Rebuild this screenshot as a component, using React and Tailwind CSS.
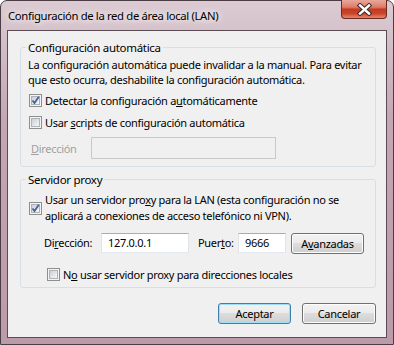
import React from "react";

const font = { fontFamily: '"Noto Sans", "Open Sans", sans-serif' };

// Windows 7 style checkbox
function CheckBox({ checked }) {
  return (
    <span className="inline-flex h-[13px] w-[13px] shrink-0 items-center justify-center border border-[#8e8f8f] bg-[#f4f4f4]">
      <span className="relative flex h-[9px] w-[9px] items-center justify-center border border-[#aeb3b9] bg-[linear-gradient(135deg,#cbcfd5,#f7f7f7)]">
        {checked && (
          <svg width="11" height="11" viewBox="0 0 11 11" className="absolute left-[-2px] top-[-2px]">
            <path d="M2.5 5.5 L4.5 8 L8.8 1.8" fill="none" stroke="#4a5f97" strokeWidth="1.8" />
          </svg>
        )}
      </span>
    </span>
  );
}

function TextBox({ value, className, disabled }) {
  return (
    <div
      className={`flex h-[20px] items-center border px-[6px] ${
        disabled
          ? "border-[#c9c9c9] bg-[#f0f0f0]"
          : "border-[#e2e3ea] border-t-[#abadb3] border-b-[#e3e9ef] bg-white"
      } ${className}`}
    >
      {value}
    </div>
  );
}

function Button({ children, isDefault, className }) {
  return (
    <div
      className={`flex h-[21px] items-center justify-center rounded-[3px] border ${
        isDefault ? "border-[#3c7fb1] shadow-[inset_0_0_0_1px_#9fdcf6]" : "border-[#707070] shadow-[inset_0_0_0_1px_#fcfcfc]"
      } bg-[linear-gradient(to_bottom,#f2f2f2_0%,#ebebeb_50%,#dddddd_50%,#cfcfcf_100%)] ${className}`}
    >
      {children}
    </div>
  );
}

export default function App() {
  return (
    <div
      style={font}
      className="flex h-[345px] w-[394px] flex-col rounded-t-[7px] border border-[#4b3d44] bg-[linear-gradient(to_bottom,#dccbd3_0px,#d3bfc8_40px,#c4a6b4_120px,#bb9aa9_100%)] px-[6px] pb-[6px] text-[11px] leading-[15px] tracking-[-0.3px] text-black"
    >
      {/* Title bar */}
      <div className="flex h-[29px] shrink-0 items-start justify-between">
        <div className="pl-[1px] pt-[7px] text-[11.3px] tracking-[-0.35px] [text-shadow:0_0_6px_#ffffff,0_0_10px_#ffffff]">
          Configuración de la red de área local (LAN)
        </div>
        <div className="-mt-px flex h-[19px] w-[46px] items-center justify-center rounded-b-[4px] border border-t-0 border-[#6b2a20] bg-[linear-gradient(to_bottom,#e9a89a_0%,#dc7c66_40%,#c7391e_52%,#c9452a_75%,#e4886f_100%)]">
          <svg width="15" height="13" viewBox="0 0 15 13">
            <path d="M3 2.5 L12 10.5 M12 2.5 L3 10.5" stroke="#3d2a2a" strokeWidth="4.4" strokeLinecap="square" />
            <path d="M3 2.5 L12 10.5 M12 2.5 L3 10.5" stroke="#ffffff" strokeWidth="2.4" strokeLinecap="square" />
          </svg>
        </div>
      </div>

      {/* Client area */}
      <div className="flex flex-1 flex-col border border-[#5a4c53] bg-[#f0f0f0] pl-[12px] pr-[10px] pt-[9px]">
        <fieldset className="h-[127px] rounded-[3px] border border-[#d5dfe5] px-[7px]">
          <legend className="ml-[-2px] px-[2px] text-[11.5px]">Configuración automática</legend>
          <div className="pt-[2px]">
            La configuración automática puede invalidar a la manual. Para evitar que esto ocurra, deshabilite la configuración automática.
          </div>
          <div className="mt-[5px] flex h-[17px] items-center gap-[3px] pl-[1px]">
            <CheckBox checked />
            <span>
              Detectar la configuración a<u>u</u>tomáticamente
            </span>
          </div>
          <div className="mt-[5px] flex h-[17px] items-center gap-[3px] pl-[1px]">
            <CheckBox />
            <span>
              Usar <u>s</u>cripts de configuración automática
            </span>
          </div>
          <div className="mt-[6px] flex items-center">
            <span className="w-[63px] pl-[3px] text-[#a0a0a0]">
              <u>D</u>irección
            </span>
            <TextBox disabled className="h-[22px] w-[185px]" />
          </div>
        </fieldset>

        <fieldset className="mt-[5px] h-[116px] rounded-[3px] border border-[#d5dfe5] px-[7px]">
          <legend className="ml-[-2px] px-[2px] text-[11.5px]">Servidor proxy</legend>
          <div className="mt-[5px] flex items-center gap-[3px] pl-[1px] leading-[16px]">
            <CheckBox checked />
            <span>
              Usar un servidor pro<u>x</u>y para la LAN (esta configuración no se aplicará a conexiones de acceso telefónico ni VPN).
            </span>
          </div>
          <div className="mt-[7px] flex items-center pl-[16px]">
            <span className="w-[57px]">
              Di<u>r</u>ección:
            </span>
            <TextBox value="127.0.0.1" className="w-[88px]" />
            <span className="ml-[9px] w-[40px]">
              Puer<u>t</u>o:
            </span>
            <TextBox value="9666" className="w-[48px] px-[4px]" />
            <Button className="ml-[5px] mt-[2px] w-[73px]">
              A<u>v</u>anzadas
            </Button>
          </div>
          <div className="mt-[12px] flex h-[17px] items-center gap-[3px] pl-[19px]">
            <CheckBox />
            <span>
              N<u>o</u> usar servidor proxy para direcciones locales
            </span>
          </div>
        </fieldset>

        <div className="mt-[15px] flex justify-end gap-[11px]">
          <Button isDefault className="w-[73px]">
            Aceptar
          </Button>
          <Button className="w-[74px]">Cancelar</Button>
        </div>
      </div>
    </div>
  );
}
